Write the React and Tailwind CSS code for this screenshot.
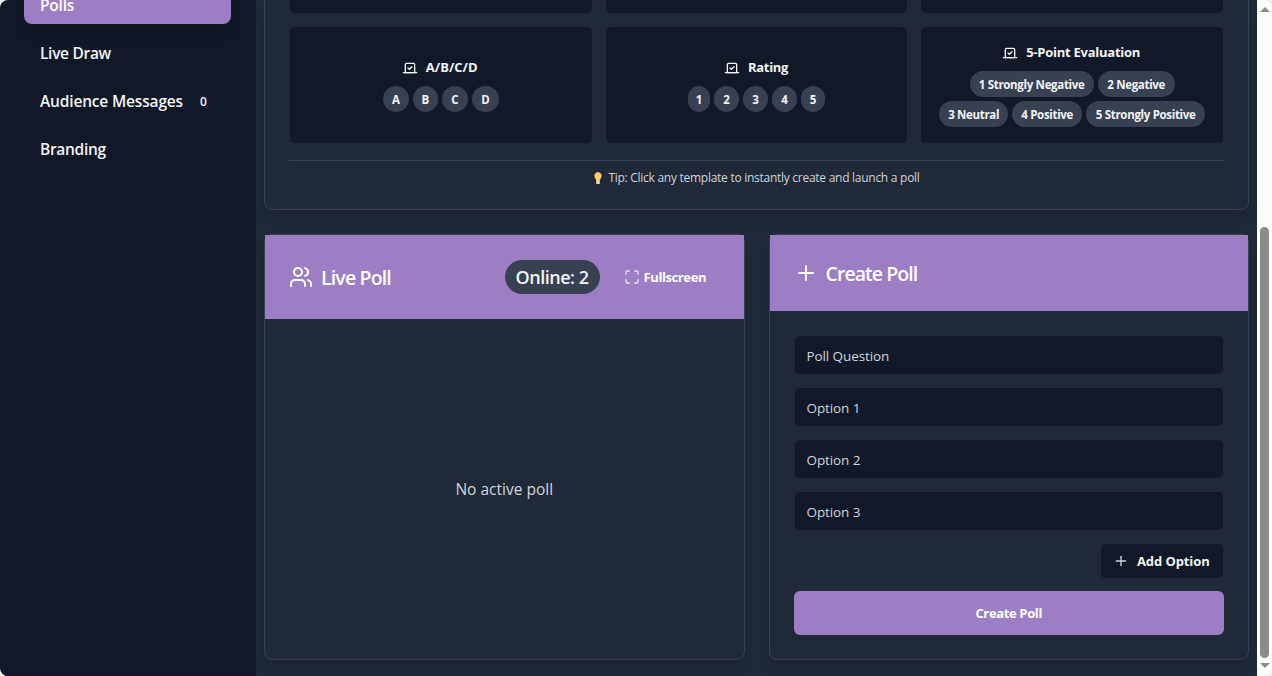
import { Maximize, Plus, Users, Vote } from 'lucide-react';

const NAV = [
  { label: 'Polls', active: true, style: 'tracking-[-0.2px]' },
  { label: 'Live Draw', style: 'tracking-[-0.3px]' },
  { label: 'Audience Messages', count: 0, style: 'w-[143px] tracking-[-0.17px]' },
  { label: 'Branding', style: 'tracking-[-0.3px]' },
];

const TEMPLATES = [
  {
    title: 'A/B/C/D',
    titleStyle: 'w-[54px] tracking-[0px]',
    options: [
      { text: 'A', size: 'w-[26px]' },
      { text: 'B', size: 'w-[25px]' },
      { text: 'C', size: 'w-[26px]' },
      { text: 'D', size: 'w-[27px]' },
    ],
  },
  {
    title: 'Rating',
    titleStyle: 'w-[41px] tracking-[-0.3px]',
    options: [
      { text: '1', size: 'w-[22px]' },
      { text: '2', size: 'w-[25px]' },
      { text: '3', size: 'w-[25px]' },
      { text: '4', size: 'w-[25px]' },
      { text: '5', size: 'w-[24px]' },
    ],
  },
  {
    title: '5-Point Evaluation',
    titleStyle: 'w-[116px] tracking-[-0.25px]',
    options: [
      { text: '1 Strongly Negative', size: 'w-[124px]' },
      { text: '2 Negative', size: 'w-[77px]' },
      { text: '3 Neutral', size: 'w-[69px]' },
      { text: '4 Positive', size: 'w-[70px]' },
      { text: '5 Strongly Positive', size: 'w-[119px]' },
    ],
  },
];

const FIELDS = ['Poll Question', 'Option 1', 'Option 2', 'Option 3'];

function Sidebar() {
  return (
    <aside className="flex w-64 shrink-0 flex-col border-b border-[#180f24] bg-[#111827] pl-6 pr-[25px]">
      <nav className="-mt-4 flex flex-col gap-2">
        {NAV.map((item) => (
          <button
            key={item.label}
            className={`flex h-10 items-center rounded-lg px-4 pt-[3px] text-left text-[15.5px] font-semibold whitespace-nowrap ${
              item.active ? 'bg-[#9d7ec4] text-white shadow-lg' : 'text-gray-100'
            }`}
          >
            <span className={item.style}>{item.label}</span>
            {item.count !== undefined && <span className="ml-[17px] text-xs">{item.count}</span>}
          </button>
        ))}
      </nav>
    </aside>
  );
}

function TemplateCard({ template }) {
  return (
    <button className="flex h-[118px] flex-col items-center justify-center gap-2 rounded-md border border-[#1f2937] bg-[#111827] px-3">
      <span className="flex h-5 items-center gap-2 text-[13px] font-bold whitespace-nowrap text-gray-100">
        <Vote size={16} />
        <span className={`text-left ${template.titleStyle}`}>{template.title}</span>
      </span>
      <span className="flex flex-wrap justify-center gap-1">
        {template.options.map((o) => (
          <span
            key={o.text}
            className={`flex h-[26px] items-center justify-center rounded-full bg-[#374151] pt-px text-[11.5px] font-bold tracking-[-0.32px] whitespace-nowrap text-gray-100 ${o.size}`}
          >
            {o.text}
          </span>
        ))}
      </span>
    </button>
  );
}

function Templates() {
  return (
    <section className="h-[210px] rounded-b-lg border border-t-0 border-[#374151] bg-[#1f2937] px-6 shadow-lg">
      <div className="grid grid-cols-3 gap-3">
        {TEMPLATES.map((t) => (
          <div key={t.title} className="h-3.5 rounded-b-md border border-t-0 border-[#1f2937] bg-[#111827]"></div>
        ))}
        {TEMPLATES.map((t) => (
          <TemplateCard key={t.title} template={t} />
        ))}
      </div>
      <div className="mt-4 flex h-[27px] items-center justify-center border-t border-[#374151] pt-2 text-[12px] text-gray-300">
        <Bulb />
        <span className="tracking-[-0.27px] whitespace-nowrap">Tip: Click any template to instantly create and launch a poll</span>
      </div>
    </section>
  );
}

function Bulb() {
  return (
    <svg className="mr-[5px] shrink-0" width="10" height="14" viewBox="0 0 10 14">
      <path
        d="M5 .7a4.200 4.200 0 0 0-4.200 4.200c0 2 1.700 2.800 2 5v2.600l1 1h2.400l1-1V9.900c.3-2.200 2-3 2-5A4.200 4.200 0 0 0 5 .7Z"
        fill="#ffcb6b"
        stroke="#12151b"
        strokeWidth="1"
      />
      <path d="M3.500 9.800h3v2.700h-3z" fill="#d5dbe3" />
    </svg>
  );
}

function LivePoll() {
  return (
    <section className="flex flex-col rounded-lg border border-[#374151] bg-[#1f2937] shadow-lg">
      <header className="flex h-[84px] items-center bg-[#9d7ec4] px-6 text-white">
        <Users size={24} />
        <h2 className="ml-2 pt-0.5 text-[19.5px] font-semibold tracking-[-0.85px] whitespace-nowrap">Live Poll</h2>
        <span className="ml-auto flex h-[34px] w-[95px] items-center justify-center rounded-full bg-[#374151] pt-px text-[18px] font-semibold tracking-[-0.5px] whitespace-nowrap text-gray-100">
          Online: 2
        </span>
        <button className="ml-3 flex h-9 w-[108px] items-center gap-1 pl-3 text-[13px] font-bold">
          <Maximize size={16} className="text-gray-200" />
          <span className="pt-px tracking-[-0.4px]">Fullscreen</span>
        </button>
      </header>
      <div className="flex flex-1 items-center justify-center pt-0.5 text-[15.5px] text-gray-300">No active poll</div>
    </section>
  );
}

function CreatePoll() {
  return (
    <section className="rounded-lg border border-[#374151] bg-[#1f2937] shadow-lg">
      <header className="flex h-[76px] items-center bg-[#9d7ec4] px-6 text-white">
        <Plus size={24} />
        <h2 className="ml-2 pt-0.5 text-[19.5px] font-semibold tracking-[-0.95px]">Create Poll</h2>
      </header>
      <div className="flex flex-col gap-3 p-6">
        {FIELDS.map((field) => (
          <input
            key={field}
            placeholder={field}
            className="h-10 rounded-md border border-[#1f2937] bg-[#111827] px-3 pt-0.5 text-[13.5px] tracking-[-0.1px] placeholder:text-gray-300"
          />
        ))}
        <button className="flex h-9 w-[124px] items-center gap-2 self-end rounded-md border border-[#1f2937] bg-[#111827] pl-3 text-[13px] font-bold whitespace-nowrap text-gray-100">
          <Plus size={16} className="text-gray-300" />
          <span className="pt-px tracking-[-0.1px]">Add Option</span>
        </button>
        <button className="h-11 rounded-md bg-[#9d7ec4] pt-px text-[13px] font-bold tracking-[-0.35px] text-white">Create Poll</button>
      </div>
    </section>
  );
}

function Scrollbar() {
  return (
    <div className="flex w-[15px] shrink-0 flex-col items-center rounded-r-lg bg-[#fcfcfc] pt-[7px] pb-2">
      <svg width="10" height="5" viewBox="0 0 10 5">
        <path d="M5 0 10 5H0Z" fill="#8b8b8b" />
      </svg>
      <div className="mt-[215px] w-[9px] flex-1 rounded-full bg-[#8b8b8b]"></div>
      <svg className="mt-[5px]" width="10" height="5" viewBox="0 0 10 5">
        <path d="M0 0h10L5 5Z" fill="#8b8b8b" />
      </svg>
    </div>
  );
}

export default function App() {
  return (
    <div className="h-[676px] w-[1272px] bg-[#f1f1f1] font-['Open_Sans','Noto_Sans',sans-serif]">
      <div className="flex h-full overflow-hidden rounded-lg">
        <Sidebar />
        <main className="flex w-[1001px] flex-col gap-6 overflow-hidden bg-[#1f2937] px-2">
          <Templates />
          <div className="grid h-[426px] grid-cols-2 gap-6">
            <LivePoll />
            <CreatePoll />
          </div>
        </main>
        <Scrollbar />
      </div>
    </div>
  );
}
